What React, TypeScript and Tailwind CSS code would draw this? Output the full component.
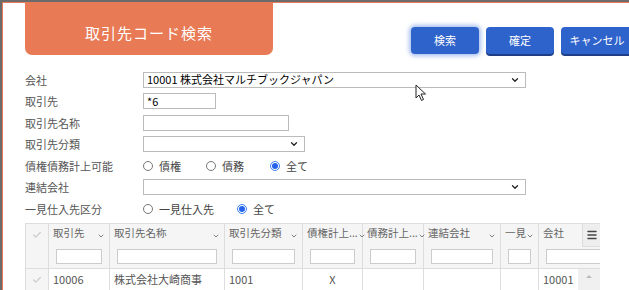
import { ChevronDown, Check, Menu } from 'lucide-react'

const FONT = { fontFamily: '"Noto Sans CJK JP", "Liberation Sans", sans-serif' }

const COLS = [
  { title: '取引先', w: 'w-[61px]' },
  { title: '取引先名称', w: 'w-[115px]' },
  { title: '取引先分類', w: 'w-[78px]' },
  { title: '債権計上...', w: 'w-[60px]' },
  { title: '債務計上...', w: 'w-[61px]' },
  { title: '連結会社', w: 'w-[77px]' },
  { title: '一見', w: 'w-[38px]' },
]

const ROW = ['10006', '株式会社大崎商事', '1001', 'X', '', '', '']

function Radio({ checked, label, w }: { checked?: boolean; label: string; w: string }) {
  return (
    <label className={`flex items-center gap-[6px] ${w}`}>
      <span
        className={`w-[10px] h-[10px] rounded-full border flex items-center justify-center ${
          checked ? 'border-[#3b82f6]' : 'border-[#777]'
        }`}
      >
        {checked && <span className="w-[6px] h-[6px] rounded-full bg-[#2563eb]" />}
      </span>
      <span className="text-[11px] text-[#444]">{label}</span>
    </label>
  )
}

function Select({ w, value }: { w: string; value?: string }) {
  return (
    <div className={`${w} h-[16px] border border-[#bbb] flex items-center justify-between pl-[3px] pr-[5px] bg-white`}>
      <span className="text-[11px] text-black leading-none">{value}</span>
      <ChevronDown className="w-[10px] h-[10px] text-[#222]" strokeWidth={3} />
    </div>
  )
}

function Input({ w, value }: { w: string; value?: string }) {
  return (
    <div className={`${w} h-[16px] border border-[#bbb] flex items-center pl-[3px] bg-white`}>
      <span className="text-[11px] text-black leading-none">{value}</span>
    </div>
  )
}

function Row({ label, children }: { label: string; children: React.ReactNode }) {
  return (
    <div className="flex items-center h-[21.5px]">
      <div className="w-[118px] text-[11px] text-[#555]">{label}</div>
      <div className="flex items-center">{children}</div>
    </div>
  )
}

export default function App() {
  return (
    <div className="w-[629px] h-[290px] overflow-hidden bg-[#6b6b6b] pt-[2px] pl-[2px]" style={FONT}>
      <div className="relative w-full h-full overflow-hidden bg-white border-t border-l border-[#e8795a]">
        {/* header */}
        <div className="flex items-start h-[66px]">
          <div className="shrink-0 ml-[22px] w-[248px] h-[52px] bg-[#e87a55] rounded-b-[7px] flex items-center justify-center pt-[8px]">
            <span className="text-white text-[15px] tracking-[1px]">取引先コード検索</span>
          </div>
          <div className="shrink-0 flex gap-[7px] ml-[138px] mt-[24px]">
            <button className="w-[68px] h-[27px] rounded-[4px] bg-[#2f63cc] text-white text-[11px] shadow-[0_0_4px_2px_rgba(96,140,230,0.55)]">
              検索
            </button>
            <button className="w-[68px] h-[27px] rounded-[4px] bg-[#2f63cc] text-white text-[11px] shadow-[0_2px_0_#1e3f85]">
              確定
            </button>
            <button className="w-[72px] h-[27px] rounded-[4px] bg-[#2f63cc] text-white text-[11px] shadow-[0_2px_0_#1e3f85] whitespace-nowrap">
              キャンセル
            </button>
          </div>
        </div>

        {/* form */}
        <div className="pl-[22px]">
          <Row label="会社">
            <Select w="w-[383px]" value="10001 株式会社マルチブックジャパン" />
          </Row>
          <Row label="取引先">
            <Input w="w-[73px]" value="*6" />
          </Row>
          <Row label="取引先名称">
            <Input w="w-[146px]" />
          </Row>
          <Row label="取引先分類">
            <Select w="w-[162px]" />
          </Row>
          <Row label="債権債務計上可能">
            <Radio label="債権" w="w-[63px]" />
            <Radio label="債務" w="w-[64px]" />
            <Radio label="全て" w="w-[50px]" checked />
          </Row>
          <Row label="連結会社">
            <Select w="w-[383px]" />
          </Row>
          <Row label="一見仕入先区分">
            <Radio label="一見仕入先" w="w-[94px]" />
            <Radio label="全て" w="w-[50px]" checked />
          </Row>
        </div>

        {/* grid */}
        <div className="ml-[22px] mt-[3px] w-[575px] border-t border-l border-[#ddd] text-[11px]">
          <div className="flex h-[45px] bg-[#f5f5f5] border-b border-[#ddd]">
            <div className="w-[23px] border-r border-[#ddd] flex justify-center pt-[6px]">
              <Check className="w-[10px] h-[10px] text-[#ccc]" strokeWidth={3} />
            </div>
            {COLS.map((c) => (
              <div key={c.title} className={`${c.w} border-r border-[#ddd] flex flex-col px-[4px] pt-[1px]`}>
                <div className="flex items-center justify-between h-[16px] text-[#666] whitespace-nowrap text-[10.5px]">
                  <span>{c.title}</span>
                  <ChevronDown className="w-[8px] h-[8px] text-[#666] mt-[6px] shrink-0" strokeWidth={2.5} />
                </div>
                <div className="mt-[8px] mx-[3px] h-[15px] border border-[#ccc] bg-white" />
              </div>
            ))}
            <div className="flex-1 flex flex-col pl-[4px] pt-[1px] relative">
              <div className="h-[16px] text-[#666] text-[10.5px]">会社</div>
              <div className="mt-[8px] ml-[3px] h-[15px] border border-[#ccc] border-r-0 bg-white" />
              <div className="absolute right-0 top-0 w-[18px] h-[23px] bg-[#eee] border-l border-b border-[#ddd] flex items-center justify-center">
                <Menu className="w-[12px] h-[12px] text-[#444]" strokeWidth={3} />
              </div>
            </div>
          </div>
          <div className="flex h-[22px] bg-white">
            <div className="w-[23px] bg-[#f5f5f5] border-r border-[#ddd] flex justify-center items-center">
              <Check className="w-[10px] h-[10px] text-[#ccc]" strokeWidth={3} />
            </div>
            {COLS.map((c, i) => (
              <div
                key={c.title}
                className={`${c.w} border-r border-[#ddd] flex items-center px-[4px] text-[#555] ${
                  i === 3 ? 'justify-center' : ''
                }`}
              >
                {ROW[i]}
              </div>
            ))}
            <div className="flex-1 flex items-center pl-[4px] text-[#555] relative">
              10001
              <div className="absolute right-0 top-0 w-[22px] h-full bg-[#f0f0f0] flex justify-center pt-[6px]">
                <span className="w-0 h-0 border-l-[3px] border-r-[3px] border-b-[3px] border-l-transparent border-r-transparent border-b-[#bbb]" />
              </div>
            </div>
          </div>
        </div>

        {/* mouse cursor */}
        <svg className="absolute left-[412px] top-[81px]" width="12" height="18" viewBox="0 0 12 18">
          <path d="M1 1 L1 14 L4 11 L6.5 16.5 L8.5 15.5 L6 10 L10.5 10 Z" fill="white" stroke="#222" strokeWidth="1" />
        </svg>
      </div>
    </div>
  )
}
